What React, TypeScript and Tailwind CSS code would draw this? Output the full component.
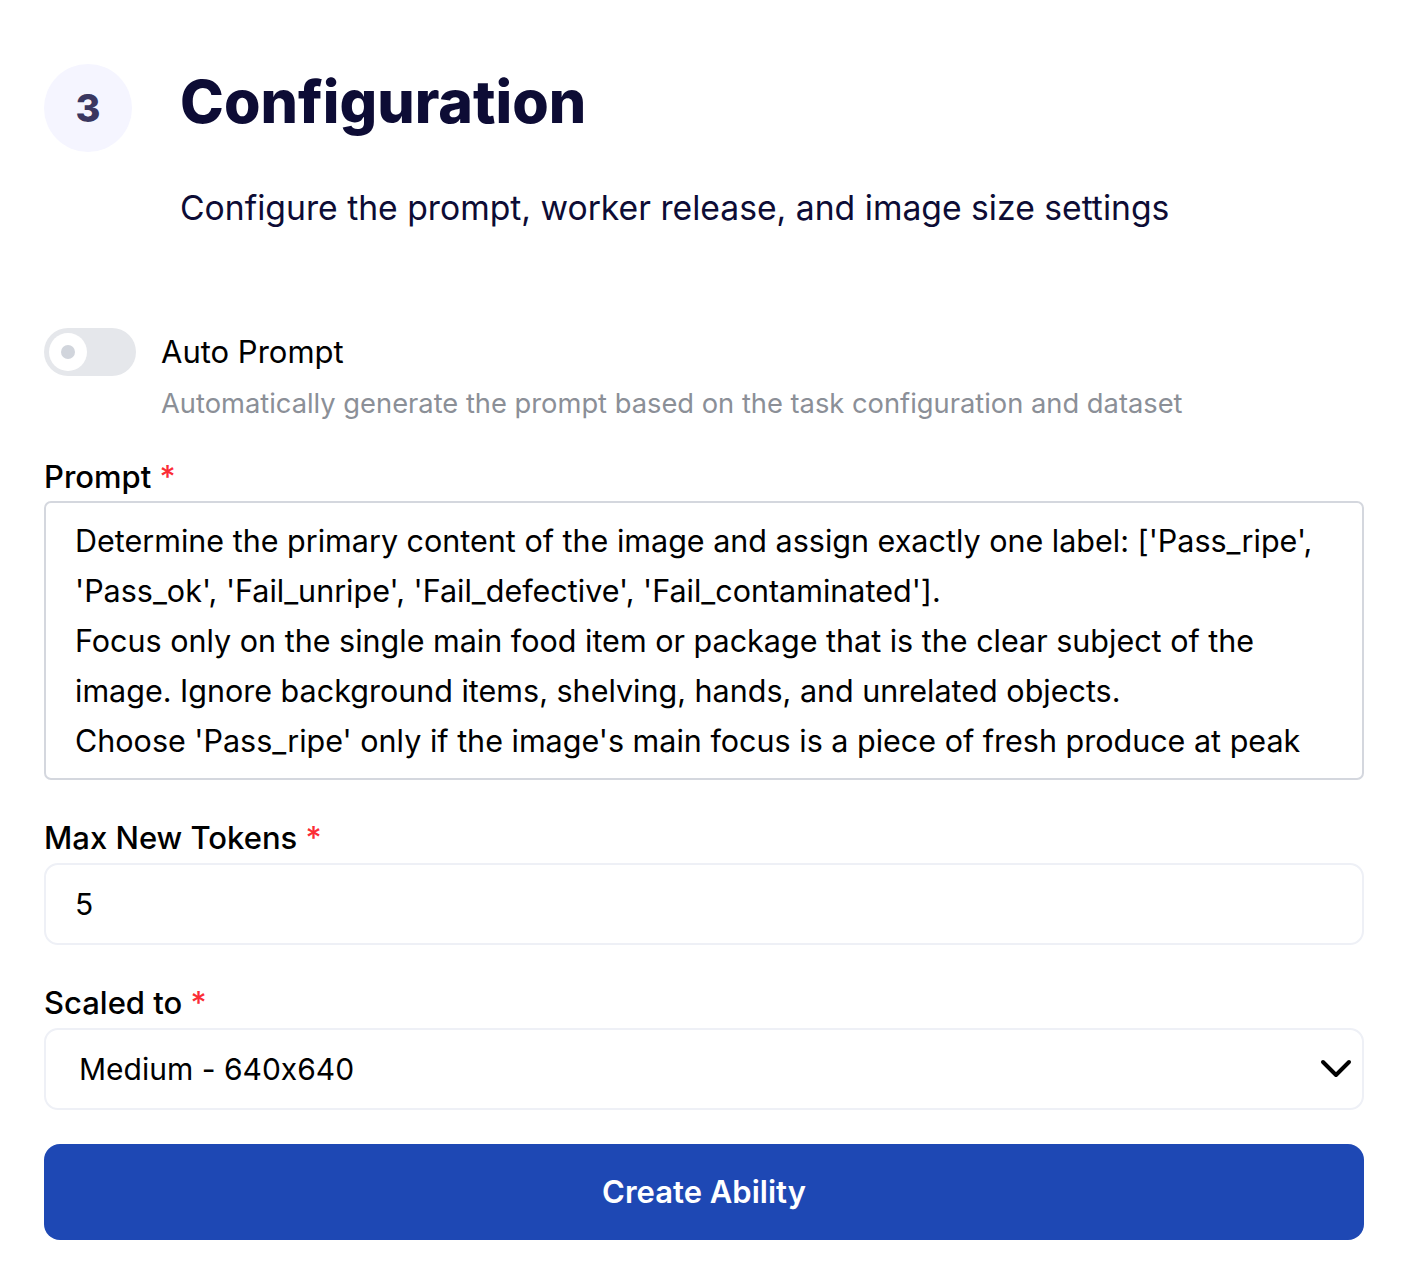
const promptText = [
  "Determine the primary content of the image and assign exactly one label: ['Pass_ripe', 'Pass_ok', 'Fail_unripe', 'Fail_defective', 'Fail_contaminated'].",
  'Focus only on the single main food item or package that is the clear subject of the image. Ignore background items, shelving, hands, and unrelated objects.',
  "Choose 'Pass_ripe' only if the image's main focus is a piece of fresh produce at peak ripeness, showing full color, natural firmness, and no visible bruising or blemishes.",
].join('\n');

function Label({ text }: { text: string }) {
  return (
    <label className="block text-[31px] leading-[36px] font-medium text-black">
      {text} <span className="text-red-500">*</span>
    </label>
  );
}

export default function App() {
  return (
    <div className="min-h-screen bg-white font-['Inter',sans-serif] [font-feature-settings:'calt'_0]">
      <div className="pl-[44px] pr-[42px] pt-[64px] pb-10">
        <div className="flex items-start">
          <div className="w-[88px] h-[88px] rounded-full bg-[#f5f5ff] flex items-center justify-center flex-shrink-0">
            <span className="text-[38px] font-extrabold text-[#3a3760]">3</span>
          </div>
          <div className="ml-[48px]">
            <h1 className="text-[59px] leading-[72px] font-extrabold text-[#0d0c35] mt-[2px]">
              Configuration
            </h1>
            <p className="mt-[50px] text-[33.7px] leading-[40px] text-[#0d0c35]">
              Configure the prompt, worker release, and image size settings
            </p>
          </div>
        </div>

        <div className="mt-[100px] flex items-start">
          <button className="w-[92px] h-[48px] rounded-full bg-gray-200 p-[5px] flex items-center flex-shrink-0">
            <span className="w-[38px] h-[38px] rounded-full bg-white flex items-center justify-center">
              <span className="w-[14px] h-[14px] rounded-full bg-gray-300" />
            </span>
          </button>
          <div className="ml-[25px]">
            <div className="text-[31px] leading-[48px] text-black">Auto Prompt</div>
            <div className="mt-[8px] text-[27.3px] leading-[40px] text-[#8b8f97]">
              Automatically generate the prompt based on the task configuration and dataset
            </div>
          </div>
        </div>

        <div className="mt-[35px]">
          <Label text="Prompt" />
          <textarea
            readOnly
            value={promptText}
            className="mt-[6px] block w-full h-[279px] resize-none overflow-hidden rounded-[7px] border-2 border-[#d4d7de] px-[29px] pt-[13px] text-[30.5px] leading-[50px] text-black outline-none"
          />
        </div>

        <div className="mt-[40px]">
          <Label text="Max New Tokens" />
          <div className="mt-[7px] h-[82px] rounded-[14px] border-2 border-[#eef0f6] px-[29px] flex items-center text-[30px] text-black">
            5
          </div>
        </div>

        <div className="mt-[40px]">
          <Label text="Scaled to" />
          <div className="mt-[7px] h-[82px] rounded-[14px] border-2 border-[#eef0f6] pl-[33px] pr-[10px] flex items-center justify-between text-[30px] text-black">
            <span>Medium - 640x640</span>
            <svg width="32" height="20" viewBox="0 0 32 20" fill="none" className="text-black">
              <polyline
                points="3,3 16,16 29,3"
                stroke="currentColor"
                strokeWidth="4"
                strokeLinecap="round"
                strokeLinejoin="round"
              />
            </svg>
          </div>
        </div>

        <button className="mt-[34px] w-full h-[96px] rounded-[16px] bg-[#1e48b4] text-white text-[31px] font-semibold">
          Create Ability
        </button>
      </div>
    </div>
  );
}
